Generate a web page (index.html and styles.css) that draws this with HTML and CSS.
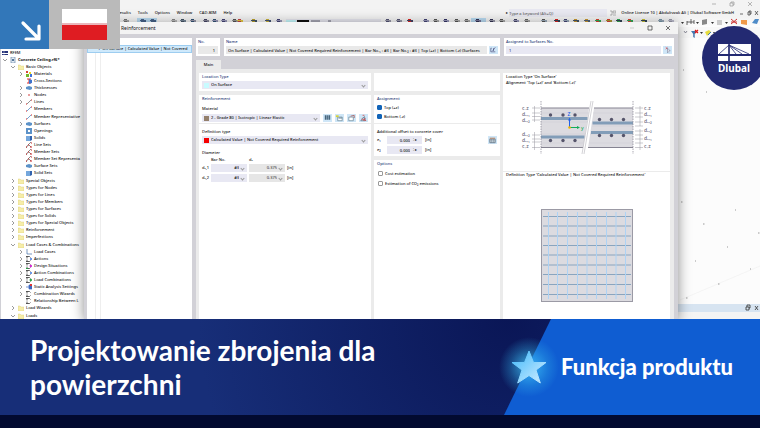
FILE: index.html
```html
<!DOCTYPE html>
<html lang="pl">
<head>
    <meta charset="UTF-8">
    <title>Projektowanie zbrojenia dla powierzchni</title>
    <link rel="stylesheet" href="styles.css">
</head>
<body>
    <div class="app">
        <div class="titlebar">
            <svg class="win-icons" viewBox="0 0 42 8">
                <path d="M1 4h4M19 3h3v3h-3zM20 3v-1h3v3h-1M37 2l4 4M41 2l-4 4"/>
            </svg>
        </div>

        <nav class="menubar">
            <a href="#">Results</a>
            <a href="#">Tools</a>
            <a href="#">Options</a>
            <a href="#">Window</a>
            <a href="#">CAD-BIM</a>
            <a href="#">Help</a>
            <span class="search-arrow">▸</span>
            <input class="search" type="text" aria-label="Search" placeholder="Type a keyword (Alt+Q)">
            <svg class="licence-icon" viewBox="0 0 6 6"><path d="M0 1h2v4H0M3 1h3v2H3zM3 5h3"/></svg>
            <span class="licence">Online Licence 10 | Abdulrzzak Ali | Dlubal Software GmbH</span>
            <svg class="doc-icons" viewBox="0 0 20 6"><path d="M1 4h3M9 2h2v3h-2zM10 2v-1h2v3h-1M16 1l3 4M19 1l-3 4"/></svg>
        </nav>

        <div class="toolbar"><svg id="toolbarIcons"></svg></div>

        <div class="main">
            <ul class="tree" id="tree"></ul>
            <div class="workspace">
                <div class="view-tools">
                    <svg viewBox="0 0 82 11">
                        <path d="M6 4l1.5 2 1.5-2" fill="none" stroke="#667" stroke-width=".7"/>
                        <path d="M13 4h6l-2.300 3v4l-1.500-1v-3z" fill="#4578b0"/>
                        <path d="M17 3l3 3M20 3l-3 3" stroke="#e01818" stroke-width="1.200"/>
                        <path d="M22 5h3l-1.500 2zM35 5h2l-1 2z" fill="#333"/>
                        <path d="M27 5l4-2 2 2-4 4z" fill="#e6dc3c"/><path d="M30 8l3-3" stroke="#3d78b5"/>
                    </svg>
                </div>
                <div class="canvas">
                    <svg viewBox="0 0 82 266">
                        <path d="M2 262L82 228" stroke="#f0f0f0" stroke-width=".7"/>
                        <path d="M5 32h1M28 54h1M3 164h1.500M57 172h1M25 186h1.500M80 195h1.500M49 209h1M17 223h1M72 231h1M40 246h1.500M8 260h1.500" stroke="#9a9a9a"/>
                    </svg>
                </div>
                <div class="dock">
                    <svg viewBox="0 0 14 8"><path d="M1 3h3v3H1zM2 3V1h3v3H4M10 2l3 4M13 2l-3 4"/></svg>
                </div>
                <div class="dock-body"></div>
            </div>
        </div>

        <section class="dialog">
            <header class="dialog-title">
                <span>Reinforcement</span>
                <svg class="win-icons" viewBox="0 0 42 8">
                    <path d="M1 4h4" opacity=".3"/><path d="M19 2h4v4h-4zM37 2l4 4M41 2l-4 4"/>
                </svg>
            </header>
            <div class="dialog-body">
                <div class="item-list">
                    <div class="item selected"><span class="item-no">1</span><span>On Surface | Calculated Value | Not Covered</span></div>
                </div>
                <form class="editor">
                    <div class="head">
                        <div class="card">
                            <label class="heading" for="no">No.</label>
                            <input class="field grey right" id="no" type="text" value="1">
                        </div>
                        <div class="card">
                            <label class="heading" for="name">Name</label>
                            <div class="line">
                                <input class="field grey" id="name" type="text" value="On Surface | Calculated Value | Not Covered Required Reinforcement | Bar No.₁ : #3 | Bar No.₂ : #3 | Top (+z) | Bottom (-z) (Surfaces">
                                <button class="tool" type="button" aria-label="Edit name"><svg viewBox="0 0 10 8"><path d="M3 2H2v4h5M4 5l3-4M5 2v3" stroke="#447" fill="none" stroke-width=".7"/></svg></button>
                            </div>
                        </div>
                        <div class="card">
                            <label class="heading" for="assigned">Assigned to Surfaces No.</label>
                            <div class="line">
                                <input class="field number" id="assigned" type="text" value="1">
                                <button class="tool" type="button" aria-label="Pick surfaces"><svg viewBox="0 0 10 8"><path d="M3 1l2 2M5 1l-2 2" stroke="#d33" stroke-width=".7"/><path d="M5 2v5l1-1 1 1M5 2l3 3H6" stroke="#557" fill="#fff" stroke-width=".5"/></svg></button>
                            </div>
                        </div>
                    </div>

                    <button class="tab" type="button">Main</button>

                    <div class="pages">
                        <div class="column">
                            <div class="card location">
                                <label class="heading" for="location">Location Type</label>
                                <div class="select"><i class="swatch cyan"></i><select id="location"><option>On Surface</option></select></div>
                            </div>
                            <div class="card upper">
                                <h3 class="heading">Reinforcement</h3>
                                <label class="caption" for="material">Material</label>
                                <div class="line material">
                                    <div class="select"><i class="swatch brown"></i><select id="material"><option>2 - Grade 80 | Isotropic | Linear Elastic</option></select></div>
                                    <button class="tool" type="button" aria-label="Library"><svg viewBox="0 0 10 8"><path d="M2 1h2v5H2zM4.500 1h1v5h-1zM6 1h2v5H6z" fill="#46657c"/></svg></button>
                                    <button class="tool" type="button" aria-label="New"><svg viewBox="0 0 10 8"><path d="M3 3h5v4H3z" fill="#fff" stroke="#57798c" stroke-width=".7"/><path d="M1 1h3v2H1z" fill="#d8d335"/><path d="M4 4h4" stroke="#57798c"/></svg></button>
                                    <button class="tool" type="button" aria-label="Edit"><svg viewBox="0 0 10 8"><path d="M2 3h5v4H2z" fill="#fff" stroke="#57798c" stroke-width=".7"/><path d="M4 2l4-1v3" stroke="#a66" fill="none"/></svg></button>
                                    <button class="tool" type="button" aria-label="Unassign"><svg viewBox="0 0 10 8"><path d="M2 7l3-4 2 4zM6 2l1 5" stroke="#567" fill="none" stroke-width=".7"/><path d="M4 1h2M3 5l5 2M7 4l-2 3" stroke="#d34b4b" stroke-width=".9"/></svg></button>
                                </div>
                            </div>
                            <div class="card lower">
                                <label class="caption" for="definition">Definition type</label>
                                <div class="select"><i class="swatch red"></i><select id="definition"><option>Calculated Value | Not Covered Required Reinforcement</option></select></div>
                                <h4 class="caption diameter">Diameter</h4>
                                <div class="bars">
                                    <span></span><span class="indent">Bar No.</span><span class="indent">dₛ</span><span></span>
                                    <label for="bar1">dₛ,1</label>
                                    <div class="select"><select id="bar1"><option>#3</option></select></div>
                                    <div class="select grey"><select aria-label="ds,1" disabled><option>0.375</option></select></div>
                                    <span>[in]</span>
                                    <label for="bar2">dₛ,2</label>
                                    <div class="select"><select id="bar2"><option>#3</option></select></div>
                                    <div class="select grey"><select aria-label="ds,2" disabled><option>0.375</option></select></div>
                                    <span>[in]</span>
                                </div>
                            </div>
                        </div>

                        <div class="column">
                            <div class="card location"></div>
                            <div class="card upper">
                                <h3 class="heading">Assignment</h3>
                                <label class="check"><input type="checkbox" checked>Top (+z)</label>
                                <label class="check"><input type="checkbox" checked>Bottom (-z)</label>
                            </div>
                            <div class="card offsets">
                                <h4 class="caption">Additional offset to concrete cover</h4>
                                <div class="offset">
                                    <label for="e1">e₁</label><input class="field" id="e1" type="text" value="0.000"><span class="spin">⁚ ▸</span><span>[in]</span>
                                    <button class="tool" type="button" aria-label="Cover"><svg viewBox="0 0 10 8"><path d="M2 3h6v4H2z" fill="#d8e4ea" stroke="#567" stroke-width=".8"/><path d="M2 2h6" stroke="#b77b55"/><path d="M4 3v4M6 3v4M2 5h6" stroke="#567" stroke-width=".4"/></svg></button>
                                </div>
                                <div class="offset">
                                    <label for="e2">e₂</label><input class="field" id="e2" type="text" value="0.000"><span class="spin">⁚ ▸</span><span>[in]</span>
                                </div>
                            </div>
                            <div class="card options">
                                <h3 class="heading">Options</h3>
                                <label class="check"><input type="checkbox">Cost estimation</label>
                                <label class="check"><input type="checkbox">Estimation of CO₂ emissions</label>
                            </div>
                        </div>

                        <div class="column preview">
                            <figure class="card section-view">
                                <figcaption>Location Type 'On Surface'<br>Alignment 'Top (+z)' and 'Bottom (-z)'</figcaption>
                                <svg viewBox="0 0 167 64">
                                    <path d="M38 10H86L80 50H38zM91 10H130V50H85z" fill="#dcdbe0"/>
                                    <path d="M38 15H86M38 24H84M38 36H82M38 45H80M90 15H130M89 28H130M87 36H130M86 45H130" stroke="#c8c7ce" stroke-width=".4"/>
                                    <path d="M38 20.500H84.500M38 39H81.500M89.500 25H130M88 34.500H130" stroke="#829db8" stroke-width="3.200"/>
                                    <path d="M38 10H86M38 49.500H80M91 10H130M85 49.500H130" stroke="#858391" stroke-width="1.200"/>
                                    <path d="M88 3L79 56M90 3L81 56" stroke="#b5b4ba" stroke-width=".6"/>
                                    <path d="M38 3V56M130 3V56" stroke="#858391" stroke-width=".7" stroke-dasharray="1.500 1"/>
                                    <path d="M31.500 8V24M31.500 34V52M29 10h8M29 15h8M29 18.500h8M29 22h8M29 37h8M29 41h8M29 44h8M29 49.500h8M137 8V28M137 31V52M132 10h8M132 15h8M132 19h8M132 24h8M132 28h8M132 33h8M132 37h8M132 41h8M132 45h8M132 49.500h8" stroke="#96959f" stroke-width=".5"/>
                                    <g fill="#55546a">
                                        <circle cx="47.500" cy="17" r="1.700"/><circle cx="60" cy="17" r="1.700"/><circle cx="72" cy="17" r="1.700"/>
                                        <circle cx="47.500" cy="42.500" r="1.700"/><circle cx="60" cy="42.500" r="1.700"/><circle cx="72" cy="42.500" r="1.700"/>
                                        <circle cx="96.500" cy="21.500" r="1.700"/><circle cx="108.500" cy="21.500" r="1.700"/><circle cx="120.500" cy="21.500" r="1.700"/>
                                        <circle cx="96.500" cy="37.500" r="1.700"/><circle cx="108.500" cy="37.500" r="1.700"/><circle cx="120.500" cy="37.500" r="1.700"/>
                                    </g>
                                    <path d="M66.500 29.500V22" stroke="#2060e8"/><path d="M65 22.500l1.500-3 1.500 3z" fill="#2060e8"/>
                                    <path d="M66.500 29.500H74" stroke="#12ac5a"/><path d="M74 28l3 1.500-3 1.500z" fill="#12ac5a"/>
                                    <circle cx="66.500" cy="29.500" r="1.300" fill="#f0b400"/>
                                    <text class="axis-z" x="64.500" y="18">Z</text><text class="axis-y" x="78" y="31.500">y</text>
                                    <g class="dims">
                                        <text x="19" y="12">c₋z</text><text x="19" y="18">dₛ,₁</text><text x="19" y="24">dₛ,₂</text>
                                        <text x="19" y="38">dₛ,₂</text><text x="19" y="44">dₛ,₁</text><text x="19" y="50">c₊z</text>
                                        <text x="141" y="12">c₋z</text><text x="141" y="18">dₛ,₁</text><text x="141" y="25">dₛ,₂</text>
                                        <text x="141" y="34">dₛ,₂</text><text x="141" y="42">dₛ,₁</text><text x="141" y="50">c₊z</text>
                                    </g>
                                </svg>
                            </figure>
                            <figure class="card grid-view">
                                <figcaption>Definition Type 'Calculated Value | Not Covered Required Reinforcement'</figcaption>
                                <svg viewBox="0 0 92 93">
                                    <rect x=".5" y=".5" width="91" height="92" fill="#dcdbe0" stroke="#9b9aa5"/>
                                    <path d="M2 7.500H90M2 17H90M2 27H90M2 36.500H90M2 46H90M2 56H90M2 65.500H90M2 75.500H90M2 85.500H90" stroke="#8aa5bf"/>
                                    <path d="M7.500 3V90M16.500 3V90M26.500 3V90M36.500 3V90M46 3V90M55.500 3V90M65.500 3V90M75 3V90M84.500 3V90" stroke="#aed3f5"/>
                                </svg>
                            </figure>
                        </div>
                    </div>
                </form>
            </div>
        </section>

        <div class="badges">
            <div class="arrow-badge">
                <svg viewBox="0 0 49 49"><path d="M23 23L38 38M39 26V39H26" fill="none" stroke="#fff" stroke-width="3.200" stroke-linecap="round" stroke-linejoin="round"/></svg>
            </div>
            <div class="flag-badge"><div class="flag"></div></div>
        </div>

        <div class="logo">
            <svg viewBox="0 0 33 17">
                <path d="M0 0H33V10H0zM0 12H33V17H0z" fill="#fff"/>
                <path d="M11 1L1 10M11 1V17M11 1L18 10M11 1L24 10M11 1L31 10" stroke="#232a72" stroke-width=".8" fill="none"/>
                <path d="M11 0V17" stroke="#232a72" stroke-width="1.500"/>
            </svg>
            <span>Dlubal</span>
        </div>
    </div>

    <div class="banner">
        <h1>Projektowanie zbrojenia dla powierzchni</h1>
        <div class="feature">
            <div class="star">
                <svg viewBox="0 0 36 36">
                    <defs><linearGradient id="starFill" x1="0" y1="0" x2="1" y2="1"><stop offset=".2" stop-color="#5cc3fb"/><stop offset=".8" stop-color="#b5e3ff"/></linearGradient></defs>
                    <path d="M18 2l4.500 11.500H35L25 21l4.300 13L18 26.500 6.700 34 11 21 1 13.500h12.500z" fill="url(#starFill)" stroke="url(#starFill)" stroke-linejoin="round"/>
                </svg>
            </div>
            <strong>Funkcja produktu</strong>
        </div>
    </div>
    <div class="strip"></div>

    <script src="app.js"></script>
</body>
</html>
```
FILE: styles.css
```css
* {
    box-sizing: border-box;
}
body {
    margin: 0;
    height: 100vh;
    display: flex;
    flex-direction: column;
    overflow: hidden;
    background: #020a30;
    font-family: "Noto Sans", "Open Sans", sans-serif;
    font-size: 4px;
    font-weight: 500;
    line-height: 6px;
    color: #111;
}
a {
    color: inherit;
    text-decoration: none;
}
h1, h3, h4, ul, figure {
    margin: 0;
    padding: 0;
}
svg {
    display: block;
}
input, select, button {
    font: inherit;
    color: inherit;
    border: 0;
    margin: 0;
    padding: 0;
    border-radius: 0;
    background: none;
    min-width: 0;
}

/* program window */
.app {
    position: relative;
    flex: 1;
    min-height: 0;
    display: flex;
    flex-direction: column;
    overflow: hidden;
    background: #f3f3f3;
}
.titlebar {
    height: 9px;
    display: flex;
    justify-content: flex-end;
    padding-right: 7px;
}
.win-icons {
    width: 42px;
    height: 8px;
    fill: none;
    stroke: #333;
    stroke-width: .7;
}
.titlebar .win-icons {
    stroke: #999;
}
.menubar {
    height: 8px;
    display: flex;
    align-items: center;
    gap: 7px;
    padding-left: 117px;
}
.search-arrow {
    margin-left: auto;
}
.search {
    width: 98px;
    height: 8px;
    margin-left: -6px;
    background: #e8e8f1;
}
.search::placeholder {
    color: #666;
    opacity: 1;
}
.licence-icon {
    width: 6px;
    height: 6px;
    margin-left: -4px;
    fill: none;
    stroke: #888;
    stroke-width: .6;
}
.licence {
    margin-left: -2px;
    white-space: nowrap;
}
.doc-icons {
    width: 20px;
    height: 6px;
    margin: 0 1px 0 -2px;
    fill: none;
    stroke: #333;
    stroke-width: .7;
}
.toolbar {
    height: 10px;
    padding-left: 120px;
    background: linear-gradient(#f3f3f3, #fdfdfd);
}
.toolbar svg {
    width: 640px;
    height: 10px;
}
.main {
    flex: 1;
    min-height: 0;
    display: flex;
    justify-content: space-between;
}

/* navigator */
.tree {
    width: 90px;
    padding-top: 22px;
    display: flex;
    flex-direction: column;
    list-style: none;
    overflow: hidden;
    background: #fff;
    border-left: 1px solid #d0d0d6;
}
.tree li {
    flex: 1;
    min-height: 0;
    display: flex;
    align-items: center;
    gap: 2px;
    white-space: nowrap;
}
.tree svg {
    flex: none;
    width: 6px;
    height: 6px;
}
.tree .chevron {
    width: 6px;
    fill: none;
    stroke: #555;
    stroke-width: .6;
}
.level-0 {
    padding-left: 1px;
}
.level-1 {
    padding-left: 1px;
    font-weight: bold;
}
.level-2 {
    padding-left: 9px;
}
.level-3 {
    padding-left: 17px;
}

/* model view */
.workspace {
    width: 82px;
    display: flex;
    flex-direction: column;
    background: #fcfcfc;
}
.view-tools {
    height: 11px;
    background: #f8f8f8;
}
.canvas {
    flex: 1;
    min-height: 0;
}
.dock {
    height: 8px;
    display: flex;
    justify-content: flex-end;
    background: #d7e4f1;
}
.dock svg {
    width: 14px;
    height: 8px;
    margin-right: 1px;
    fill: none;
    stroke: #333;
    stroke-width: .8;
}
.dock-body {
    height: 7px;
    background: #f4f4f4;
}

/* reinforcement dialog */
.dialog {
    position: absolute;
    top: 22px;
    left: 84px;
    right: 82px;
    bottom: 0;
    display: flex;
    flex-direction: column;
    background: #d2d1d7;
    box-shadow: 0 2px 12px rgba(0, 0, 0, .45);
}
.dialog-title {
    height: 12px;
    display: flex;
    align-items: center;
    justify-content: space-between;
    padding: 0 7px 0 37px;
    background: #f3f3f3;
    font-size: 5px;
    font-weight: normal;
}
.dialog-body {
    flex: 1;
    min-height: 0;
    display: flex;
    gap: 4px;
    padding: 4px 4px 0 3px;
}
.item-list {
    width: 105px;
    padding-top: 7px;
    background: linear-gradient(90deg, #fff 8px, #eee 8px, #eee 9px, #fff 9px, #fff 13px, #eee 13px, #eee 14px, #fff 14px);
}
.item {
    height: 8px;
    display: flex;
    gap: 2px;
    padding-left: 10px;
    overflow: hidden;
    white-space: nowrap;
    background: #cfe9fb;
    border: 1px solid #9dcdf0;
}
.editor {
    flex: 1;
    min-width: 0;
    display: flex;
    flex-direction: column;
    align-items: stretch;
}
.head {
    display: grid;
    grid-template-columns: 24px 1fr 170px;
    gap: 4px;
}
.card {
    padding: 0 3px;
    background: #fff;
}
.head .card {
    height: 18px;
    padding: 0 2px;
}
.heading {
    display: block;
    font-size: 4px;
    font-weight: 500;
    line-height: 8px;
    color: #2b4079;
}
.field {
    display: block;
    width: 100%;
    height: 8px;
    padding: 0 3px;
    background: #e8e8f3;
}
.field.grey {
    background: #e9e9e9;
}
.field.right {
    text-align: right;
}
.field.number {
    color: #2b4079;
}
#name {
    padding: 0 0 0 2px;
}
.line {
    display: flex;
    gap: 2px;
}
.tool {
    flex: none;
    width: 9px;
    height: 8px;
    background: #cfe6f7;
}
.tool svg {
    width: 9px;
    height: 8px;
}
.tab {
    width: 25px;
    height: 9px;
    margin-top: 4px;
    background: #ebebeb;
    text-align: center;
}
.pages {
    flex: 1;
    min-height: 0;
    display: grid;
    grid-template-columns: 172fr 126fr 167fr;
    gap: 3px;
    padding: 4px 4px 0 3px;
    background: #ebebeb;
}
.column {
    min-width: 0;
    min-height: 0;
    display: flex;
    flex-direction: column;
}
.location {
    height: 18px;
    margin-bottom: 4px;
}
.upper {
    height: 28px;
    margin-bottom: 1px;
}
.lower, .options {
    flex: 1;
}
.caption {
    display: block;
    font-size: 4px;
    font-weight: 500;
    line-height: 8px;
    color: #111;
}
.upper .caption {
    line-height: 11px;
}
.lower, .offsets {
    padding-top: 4px;
}
.diameter {
    margin-top: 5px;
}
.select {
    flex: 1;
    height: 8px;
    display: flex;
    align-items: center;
    gap: 2px;
    padding: 0 3px 0 2px;
    background: #e8e8f3;
}
.select select {
    flex: 1;
    height: 8px;
    appearance: none;
}
.select::after {
    content: "";
    width: 2px;
    height: 2px;
    box-sizing: content-box;
    border: solid #999;
    border-width: 0 1px 1px 0;
    transform: rotate(45deg);
}
.select.grey {
    background: #e6e6e6;
}
.select select:disabled {
    color: #444;
    opacity: 1;
}
.swatch {
    width: 5px;
    height: 5px;
}
.cyan {
    background: #c8fbff;
}
.brown {
    background: #94806c;
}
.red {
    background: #f50000;
}
.material {
    gap: 3px;
}
.bars {
    display: grid;
    grid-template-columns: 7px 36px 36px 1fr;
    gap: 2px;
    align-items: center;
}
.bars select {
    text-align: right;
    text-align-last: right;
}
.indent {
    line-height: 5px;
}
.check {
    display: flex;
    align-items: center;
    gap: 2px;
    height: 9px;
}
.check input {
    appearance: none;
    width: 5px;
    height: 5px;
    border: 1px solid #999;
    border-radius: 1px;
    background: #fff;
}
.check input:checked {
    border-color: #1264b8;
    background: #1264b8;
}
.offsets {
    height: 32px;
    margin-bottom: 4px;
}
.offset {
    display: flex;
    align-items: center;
    height: 8px;
    margin-bottom: 2px;
}
.offset label {
    width: 10px;
}
.offset .field {
    width: 26px;
    text-align: right;
}
.offset .spin {
    width: 9px;
    margin-right: 3px;
    background: #e8e8f3;
    line-height: 8px;
    height: 8px;
}
.offset .tool {
    margin-left: auto;
}
.options .check {
    padding-left: 1px;
    margin-top: 1px;
}
.preview {
    gap: 1px;
}
.section-view {
    height: 98px;
    padding: 1px 0 0;
}
.section-view svg {
    width: 100%;
    margin-top: 12px;
}
figcaption {
    padding: 0 3px;
    white-space: nowrap;
}
.grid-view {
    flex: 1;
    min-height: 0;
    padding: 0;
}
.grid-view svg {
    width: 92px;
    margin: 31px auto 0 38px;
}
.dims {
    font-size: 5px;
    fill: #66657a;
}
.axis-z {
    font-size: 5px;
    fill: #2060e8;
}
.axis-y {
    font-size: 5px;
    fill: #12ac5a;
}

/* badges over the window */
.badges {
    position: absolute;
    top: 0;
    left: 0;
    display: flex;
}
.arrow-badge {
    width: 49px;
    height: 49px;
    background: #3277b9;
}
.flag-badge {
    width: 71px;
    height: 49px;
    padding: 9px 13px;
    background: #bababa;
}
.flag {
    height: 31px;
    background: linear-gradient(#fff 14px, #eab6bb 14px, #eab6bb 16px, #df1c22 16px);
}
.logo {
    position: absolute;
    top: 26px;
    right: -6px;
    width: 64px;
    height: 64px;
    padding-top: 18px;
    border-radius: 50%;
    background: #232a72;
    text-align: center;
}
.logo svg {
    width: 33px;
    height: 17px;
    margin: 0 auto;
}
.logo span {
    display: block;
    color: #fff;
    font-size: 10px;
    font-weight: bold;
    line-height: 15px;
}

/* caption banner */
.banner {
    flex: none;
    height: 96px;
    display: flex;
    align-items: center;
    justify-content: space-between;
    background: radial-gradient(circle at 67% 0, #0a1656, #172e78 60%);
    color: #fff;
    font-family: Lato, sans-serif;
}
h1 {
    width: 400px;
    margin-left: 30px;
    font-size: 28px;
    font-weight: bold;
    line-height: 34px;
}
.feature {
    position: relative;
    width: 256px;
    height: 100%;
    display: flex;
    align-items: center;
    gap: 14px;
    padding-left: 7px;
}
.feature::before {
    content: "";
    position: absolute;
    inset: 0;
    background: #0f5dd2;
    clip-path: polygon(47px 0, 100% 0, 100% 100%, 0 100%);
}
.star, .feature strong {
    position: relative;
}
.star::before {
    content: "";
    position: absolute;
    inset: -14px;
    background: radial-gradient(circle, rgba(60, 190, 245, .75) 10%, rgba(50, 180, 235, .3) 42%, transparent 66%);
}
.star svg {
    position: relative;
    width: 36px;
    height: 36px;
}
.feature strong {
    font-size: 22px;
    font-weight: 900;
    line-height: 28px;
    white-space: nowrap;
}
.strip {
    flex: none;
    height: 13px;
    background: #020a30;
}
```
FILE: app.js
```js
// [level, state, icon, label]  state: "+" closed, "-" open, "" leaf
const rows = [
    [0, "", "rfem", "RFEM"],
    [1, "-", "model", "Concrete Ceiling.rf6*"],
    [2, "-", "folder", "Basic Objects"],
    [3, "+", "materials", "Materials"],
    [3, "", "section", "Cross-Sections"],
    [3, "+", "surface", "Thicknesses"],
    [3, "+", "node", "Nodes"],
    [3, "+", "line", "Lines"],
    [3, "", "member", "Members"],
    [3, "", "member", "Member Representative"],
    [3, "+", "surface", "Surfaces"],
    [3, "", "opening", "Openings"],
    [3, "", "solid", "Solids"],
    [3, "", "sets", "Line Sets"],
    [3, "", "sets", "Member Sets"],
    [3, "", "sets", "Member Set Representa"],
    [3, "", "surface", "Surface Sets"],
    [3, "", "solid", "Solid Sets"],
    [2, "+", "folder", "Special Objects"],
    [2, "+", "folder", "Types for Nodes"],
    [2, "+", "folder", "Types for Lines"],
    [2, "+", "folder", "Types for Members"],
    [2, "+", "folder", "Types for Surfaces"],
    [2, "+", "folder", "Types for Solids"],
    [2, "+", "folder", "Types for Special Objects"],
    [2, "+", "folder", "Reinforcement"],
    [2, "+", "folder", "Imperfections"],
    [2, "-", "folder", "Load Cases & Combinations"],
    [3, "+", "loadcase", "Load Cases"],
    [3, "+", "comboBlue", "Actions"],
    [3, "+", "comboPink", "Design Situations"],
    [3, "+", "comboBlue", "Action Combinations"],
    [3, "+", "comboGreen", "Load Combinations"],
    [3, "+", "settings", "Static Analysis Settings"],
    [3, "+", "combo", "Combination Wizards"],
    [3, "", "combo", "Relationship Between L"],
    [2, "+", "folder", "Load Wizards"],
    [2, "-", "folder", "Loads"]
];

const bracket = '<path d="M0 .5h3.500l1 1M0 5.500h3.500l1-1M1 .5v2M1 3.500v2" fill="none" stroke="#333" stroke-width=".8"/>';
const icons = {
    rfem: '<path d="M0 1h6v2H0zM0 4h6v1H0z" fill="#26347a"/><path d="M2 1v4" stroke="#fff" stroke-width=".4"/>',
    model: '<path d="M1 0h4v6H1z" fill="#e4edf5" stroke="#56779a" stroke-width=".6"/><path d="M2 2h2v2H2z" fill="#56779a"/>',
    folder: '<path d="M0 1h2l1 1h3v4H0z" fill="#f6eda9" stroke="#d8c973" stroke-width=".4"/>',
    materials: '<path d="M0 0h2v2H0z" fill="#d8423c"/><path d="M0 3h3v3H0z" fill="#76b82a"/><path d="M3 1h2v2H3z" fill="#e5d420"/><path d="M4 3h2v3H4z" fill="#3d74dd"/>',
    section: '<path d="M1 1h4M1 5h4M3 1v4" stroke="#d33" stroke-width="1"/><path d="M3 1l3 1v3l-3 1" fill="#3c74cc"/>',
    surface: '<path d="M0 2l3-1 3 1v2L4 5 0 4z" fill="#5c92c8"/>',
    node: '<circle cx="3" cy="3" r=".8" fill="#c22"/>',
    line: '<path d="M1 5l4-4" stroke="#444" stroke-width=".6"/><path d="M0 5h1M5 1h1" stroke="#c22"/>',
    member: '<path d="M1 5l4-4" stroke="#4e8ac8" stroke-width=".8"/><path d="M0 5h1M5 1h1" stroke="#c22"/>',
    opening: '<path d="M0 0h6v6H0z" fill="#5c92c8"/><path d="M2 2h2v2H2z" fill="#fff"/>',
    solid: '<path d="M0 1h4v5H0z" fill="#75a7dc"/><path d="M4 1h2v4L4 6z" fill="#3263ae"/>',
    sets: '<path d="M0 6l2-3 3-3M3 3l2 2" stroke="#555" stroke-width=".7" fill="none"/><path d="M0 5h1M2 3h1M5 1h1M4 5h2" stroke="#c22"/>',
    loadcase: '<path d="M1 0v5h5" stroke="#3f6fa8" stroke-width=".7" fill="none"/>',
    combo: bracket,
    comboBlue: bracket + '<circle cx="5" cy="3" r="1" fill="#3d78e0"/>',
    comboPink: bracket + '<circle cx="4.800" cy="3" r="1.200" fill="#d622d6"/><path d="M0 5.500h2" stroke="#2a4"/>',
    comboGreen: bracket + '<circle cx="4.800" cy="3" r="1.200" fill="#22a84a"/>',
    settings: '<path d="M0 3h3M3 1h3v4H3z" stroke="#3c68c0" fill="#3c68c0" stroke-width=".7"/><path d="M4 0h2v2H4z" fill="#d33"/>'
};
const chevrons = { "+": "M2 1l2 2-2 2", "-": "M1 2l2 2 2-2", "": "" };

document.getElementById("tree").innerHTML = rows.map(([level, state, icon, label]) => `
    <li class="level-${level}">
        ${level ? `<svg class="chevron" viewBox="0 0 6 6"><path d="${chevrons[state]}"/></svg>` : ""}
        <svg viewBox="0 0 6 6">${icons[icon]}</svg>
        <span>${label.replace("&", "&amp;")}</span>
    </li>`).join("");

// toolbar glyphs: [x, colour, accent]
const tools = [
    [3, "#777", "#aaa"], [20, "#49658b", "#49658b"], [30, "#49658b", "#49658b"], [51, "#888", "#bbb"],
    [60, "#456", "#789"], [70, "#357", "#99a"], [83, "#446", "#889"], [92, "#357", "#99b"],
    [101, "#447", "#99b"], [112, "#555", "#999"], [117, "#c44", "#e6cc42"], [131, "#bba22c", "#456"],
    [145, "#cbb53c", "#457"], [156, "#447", "#99b"], [265, "#557", "#99a"], [276, "#557", "#99a"],
    [287, "#d22", "#446"], [303, "#447", "#99b"], [313, "#555", "#aaa"], [323, "#336", "#99b"],
    [334, "#555", "#aaa"], [344, "#666", "#aaa"], [355, "#335", "#779"], [369, "#335", "#99a"],
    [379, "#555", "#aaa"], [393, "#446", "#99b"], [404, "#666", "#aaa"], [421, "#555", "#9ab"],
    [434, "#d22", "#345"], [443, "#447", "#9ab"], [453, "#c93", "#456"], [464, "#c93", "#567"],
    [475, "#d43", "#3a5"], [486, "#d43", "#a93"], [496, "#3a5", "#345"], [507, "#d43", "#3a5"],
    [521, "#c9c23b", "#345"], [538, "#79a", "#9ab"], [548, "#99a", "#bbc"]
];
const small = tools.map(([x, a, b]) =>
    `<path d="M${x + 1} 2h3v5h-3z" fill="${a}"/><path d="M${x} 3h6v1h-6zM${x + 4} 4h2v3h-2z" fill="${b}"/>`).join("");

document.getElementById("toolbarIcons").innerHTML = `
    <path d="M17 1h20v8H17zM351 1h15v8h-15z" fill="#b9dbf2"/>
    <path d="M166 2h95v7h-95z" fill="#e8e8f1"/>
    <path d="M166 3h10v7h-10z" fill="#c8fbff"/><path d="M177 3h12v6h-12z" fill="#111"/>
    <path d="M191 4h9M208 4h3" stroke="#667"/>
    ${small}
    <path d="M561 5h3l-1.500 2zM576 5h3l-1.500 2zM591 5h3l-1.500 2zM605 5h3l-1.500 2z" fill="#333"/>
    <path d="M567 8V4M571 7V2M567 5h7M574 7V3" stroke="#444" stroke-width=".8"/>
    <path d="M582 3l5-1v5l-5 1z" fill="#888"/><path d="M597 3h5v5h-5z" fill="#ccc"/>
    <path d="M611 2l6 5M617 2l-6 5M611 5h6" stroke="#c33"/>
    <path d="M621 3h6v5l-6-1z" fill="#f09a4a"/><path d="M632 6l3-4h4l-2 5z" fill="#4f8cc8"/>`;
```
